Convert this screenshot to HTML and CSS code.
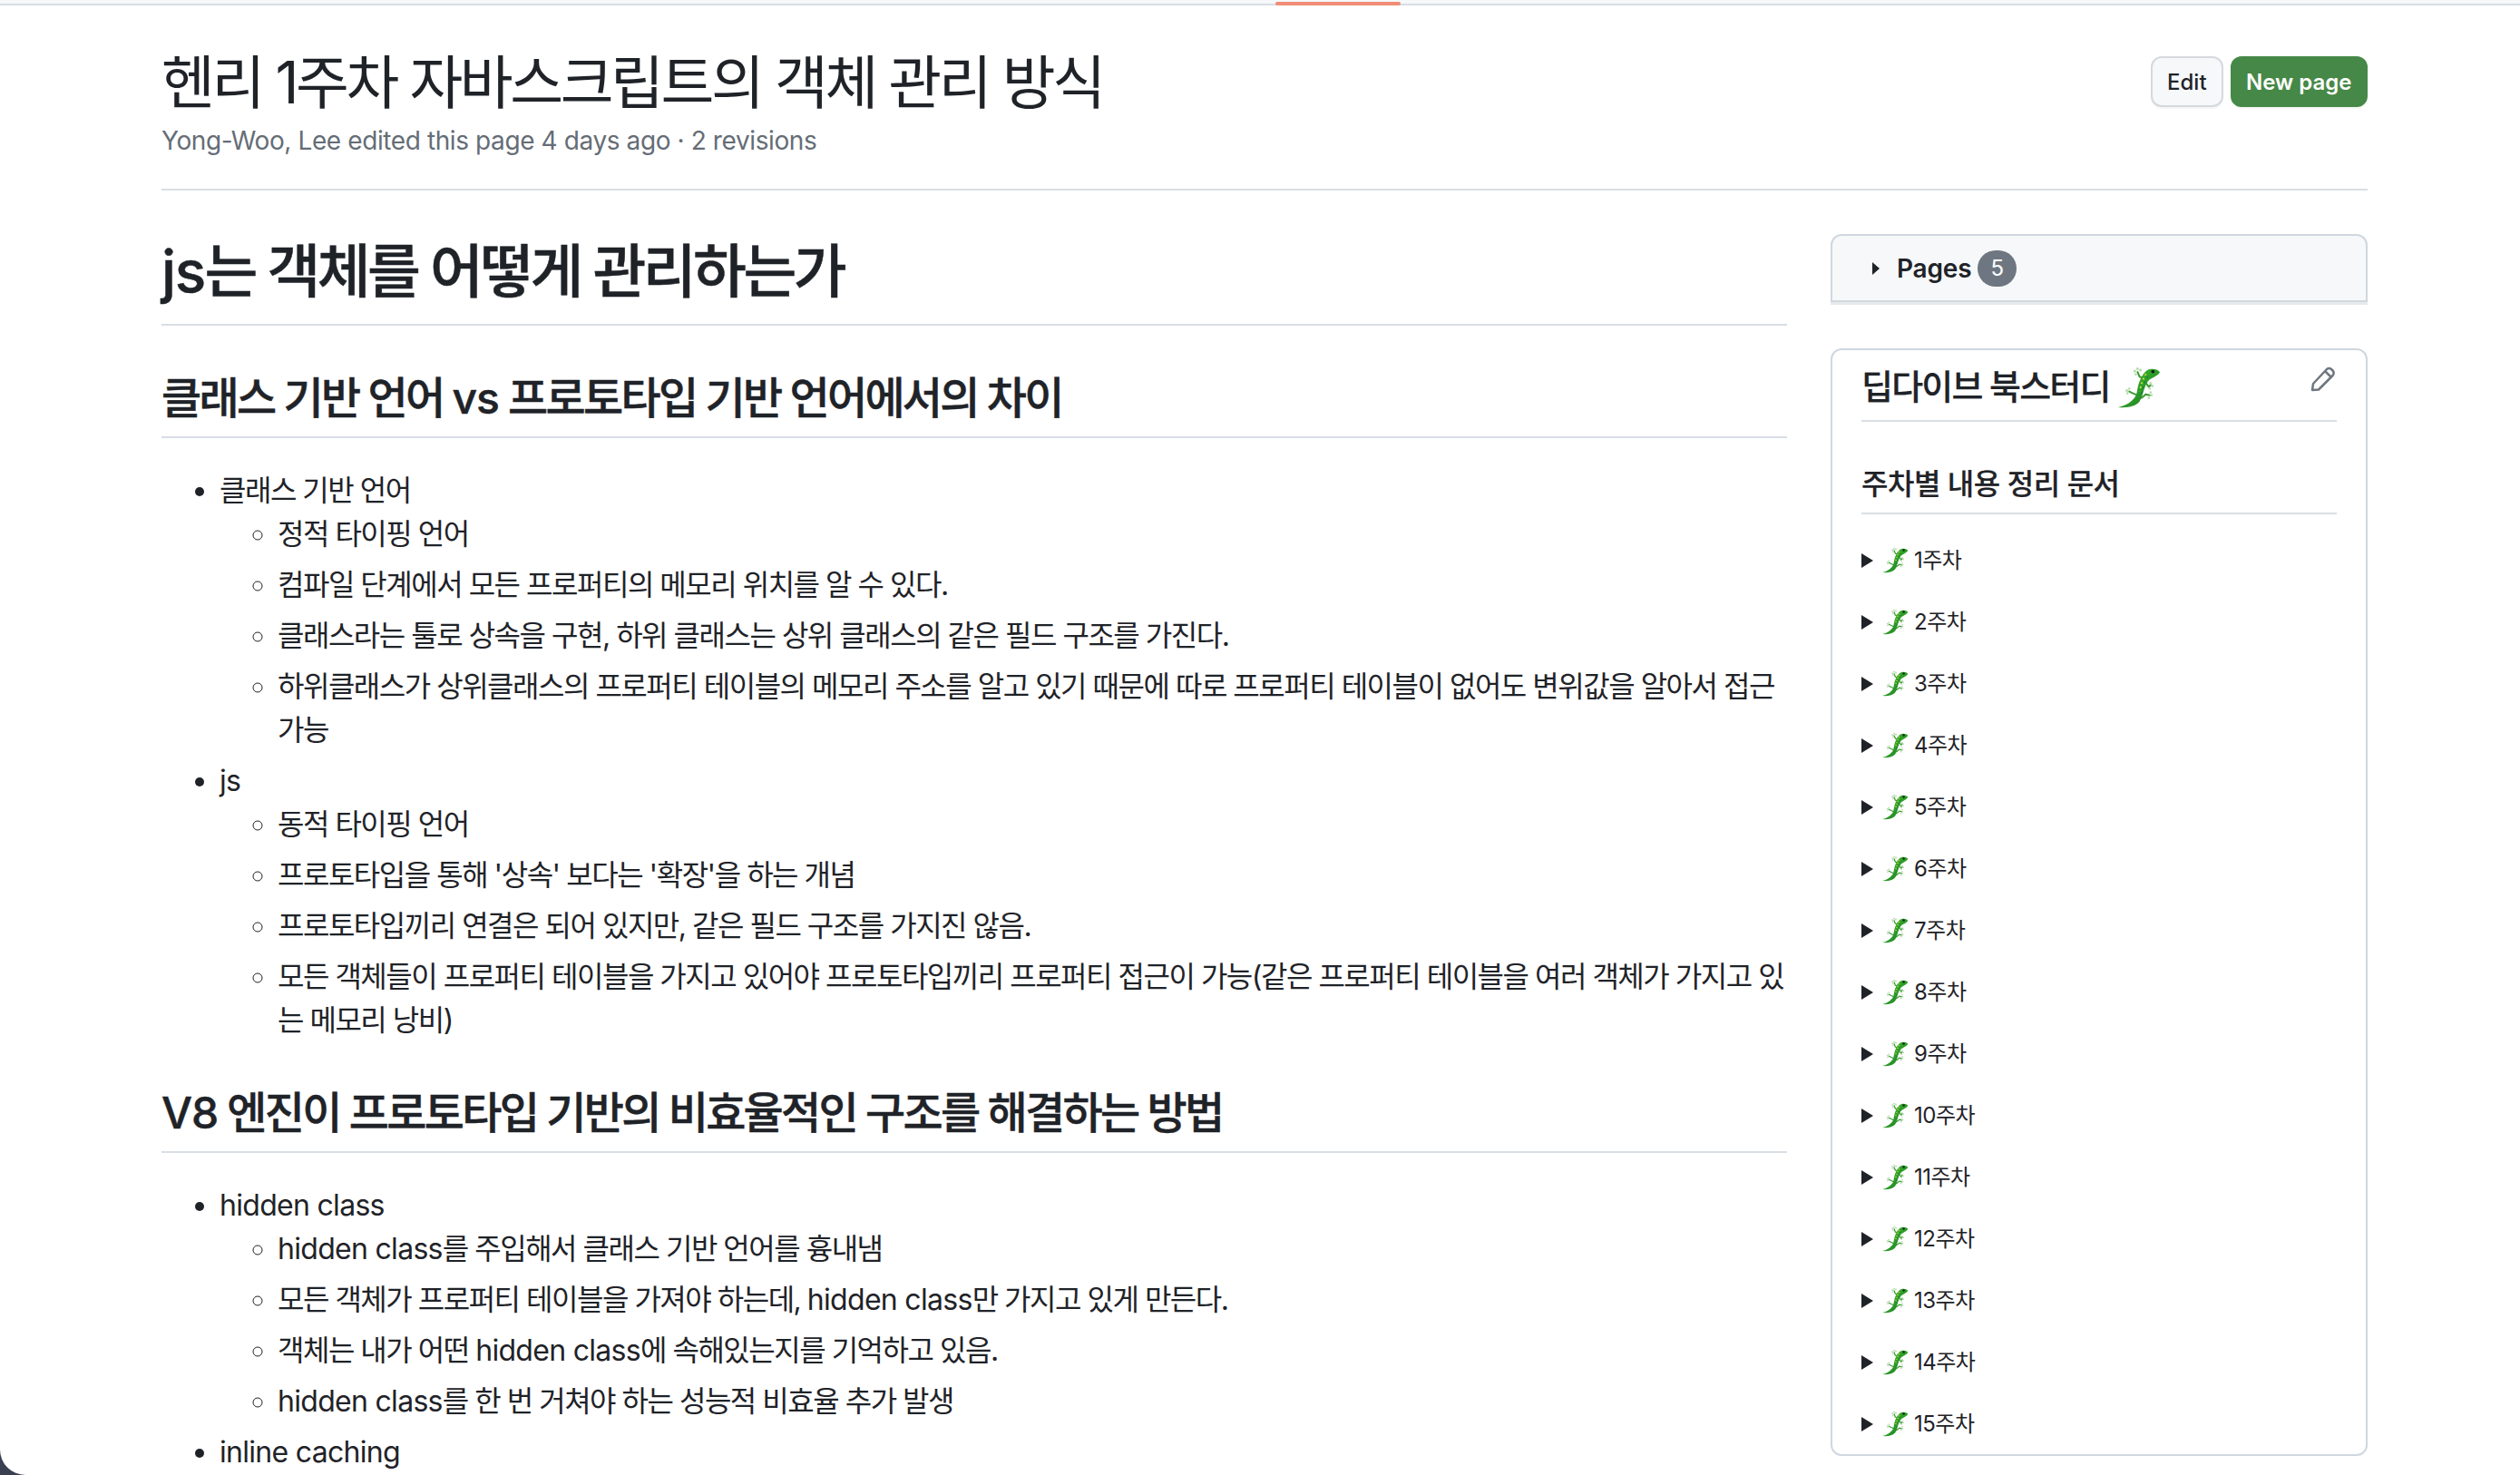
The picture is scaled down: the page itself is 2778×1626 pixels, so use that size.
FILE: index.html
```html
<!DOCTYPE html>
<html lang="ko">
<head>
<meta charset="utf-8">
<title>헨리 1주차 자바스크립트의 객체 관리 방식</title>
<link rel="stylesheet" href="styles.css">
</head>
<body>
<svg class="defs" width="0" height="0" aria-hidden="true">
  <defs>
    <linearGradient id="liz" x1="0" y1="0" x2="1" y2="1">
      <stop offset="0" stop-color="#4cc52a"/>
      <stop offset=".55" stop-color="#2b9a28"/>
      <stop offset="1" stop-color="#17741e"/>
    </linearGradient>
    <symbol id="lizard" viewBox="7 7 47 47">
      <g fill="none" stroke="#3f9a35" stroke-width="2" stroke-linecap="round" stroke-linejoin="round">
        <path d="M37 20 L31 18 L29 13"/>
        <path d="M38 25 L41 29 L43 27"/>
        <path d="M29 38 L24 36 L20 34"/>
        <path d="M33 41 L38 37 L42 38"/>
      </g>
      <g fill="#b4dcab">
        <circle cx="26" cy="12" r="1.500"/><circle cx="29" cy="9.500" r="1.500"/><circle cx="32" cy="11" r="1.500"/><circle cx="27" cy="15.500" r="1.300"/>
        <circle cx="43" cy="25" r="1.300"/><circle cx="45" cy="28" r="1.300"/><circle cx="42" cy="31" r="1.300"/>
        <circle cx="17.500" cy="33" r="1.500"/><circle cx="20" cy="31" r="1.300"/><circle cx="18" cy="36" r="1.300"/>
        <circle cx="43" cy="35" r="1.300"/><circle cx="44" cy="38" r="1.300"/><circle cx="41" cy="41" r="1.300"/>
      </g>
      <path fill="url(#liz)" d="M53 13 C51 10 46 9 42 10 C38 11 35 15 33 19 C30 24 29 30 28 36 C27 41 20 49 8 51 C18 52 27 50 31 45 C34 40 35 34 37 29 C38 26 40 23 42 21 C45 19 51 17 53 13Z"/>
      <path fill="none" stroke="#d0df30" stroke-width="1.800" stroke-dasharray="2 3" d="M38 15 C35 20 33 26 31 34"/>
      <path fill="none" stroke="#0f7c52" stroke-width="1.400" stroke-dasharray="2 4" d="M40 18 C37 23 35 29 33 37"/>
      <circle cx="45.500" cy="12.500" r="1.900" fill="#10241a"/>
    </symbol>
  </defs>
</svg>
<div class="window">
  <div class="topbar"><span class="progress"></span></div>
  <div class="page">
    <header class="page-head">
      <div class="head-text">
        <h1 class="page-title">헨리 1주차 자바스크립트의 객체 관리 방식</h1>
        <p class="page-meta">Yong-Woo, Lee edited this page 4 days ago · 2 revisions</p>
      </div>
      <div class="actions">
        <a class="btn">Edit</a>
        <a class="btn btn-green">New page</a>
      </div>
    </header>
    <div class="layout">
      <main class="content">
        <h1><span class="lat">js</span>는 객체를 어떻게 관리하는가</h1>
        <h2>클래스 기반 언어 <span class="lat">vs</span> 프로토타입 기반 언어에서의 차이</h2>
        <ul>
          <li>클래스 기반 언어
            <ul>
              <li>정적 타이핑 언어</li>
              <li>컴파일 단계에서 모든 프로퍼티의 메모리 위치를 알 수 있다.</li>
              <li>클래스라는 툴로 상속을 구현, 하위 클래스는 상위 클래스의 같은 필드 구조를 가진다.</li>
              <li>하위클래스가 상위클래스의 프로퍼티 테이블의 메모리 주소를 알고 있기 때문에 따로 프로퍼티 테이블이 없어도 변위값을 알아서 접근 가능</li>
            </ul>
          </li>
          <li><span class="lat">js</span>
            <ul>
              <li>동적 타이핑 언어</li>
              <li>프로토타입을 통해 '상속' 보다는 '확장'을 하는 개념</li>
              <li>프로토타입끼리 연결은 되어 있지만, 같은 필드 구조를 가지진 않음.</li>
              <li>모든 객체들이 프로퍼티 테이블을 가지고 있어야 프로토타입끼리 프로퍼티 접근이 가능(같은 프로퍼티 테이블을 여러 객체가 가지고 있는 메모리 낭비)</li>
            </ul>
          </li>
        </ul>
        <h2><span class="lat">V8</span> 엔진이 프로토타입 기반의 비효율적인 구조를 해결하는 방법</h2>
        <ul>
          <li><span class="lat">hidden class</span>
            <ul>
              <li><span class="lat">hidden class</span>를 주입해서 클래스 기반 언어를 흉내냄</li>
              <li>모든 객체가 프로퍼티 테이블을 가져야 하는데, <span class="lat">hidden class</span>만 가지고 있게 만든다.</li>
              <li>객체는 내가 어떤 <span class="lat">hidden class</span>에 속해있는지를 기억하고 있음.</li>
              <li><span class="lat">hidden class</span>를 한 번 거쳐야 하는 성능적 비효율 추가 발생</li>
            </ul>
          </li>
          <li><span class="lat">inline caching</span></li>
        </ul>
      </main>
      <aside class="sidebar">
        <div class="pages-box">
          <svg class="caret" viewBox="0 0 8 14" width="8" height="14"><path d="M0 0 L8 7 L0 14Z"/></svg>
          <span class="pages-label">Pages</span>
          <span class="counter">5</span>
        </div>
        <div class="custom-box">
          <svg class="pencil" viewBox="0 0 27 28" width="27" height="28" fill="none" stroke="#6e7781" stroke-width="2.500" stroke-linejoin="round">
            <path d="M2 26 L3 19 L18 3 Q20.500 1 23 3 L25 5 Q26.500 7.500 24.500 10 L9 25.500Z"/>
            <path d="M16 5 L23 12"/>
          </svg>
          <h2 class="box-title">딥다이브 북스터디 <svg class="emoji-lg"><use href="#lizard"/></svg></h2>
          <h3 class="box-sub">주차별 내용 정리 문서</h3>
          <details><summary><svg class="emoji"><use href="#lizard"/></svg> 1주차</summary></details>
          <details><summary><svg class="emoji"><use href="#lizard"/></svg> 2주차</summary></details>
          <details><summary><svg class="emoji"><use href="#lizard"/></svg> 3주차</summary></details>
          <details><summary><svg class="emoji"><use href="#lizard"/></svg> 4주차</summary></details>
          <details><summary><svg class="emoji"><use href="#lizard"/></svg> 5주차</summary></details>
          <details><summary><svg class="emoji"><use href="#lizard"/></svg> 6주차</summary></details>
          <details><summary><svg class="emoji"><use href="#lizard"/></svg> 7주차</summary></details>
          <details><summary><svg class="emoji"><use href="#lizard"/></svg> 8주차</summary></details>
          <details><summary><svg class="emoji"><use href="#lizard"/></svg> 9주차</summary></details>
          <details><summary><svg class="emoji"><use href="#lizard"/></svg> 10주차</summary></details>
          <details><summary><svg class="emoji"><use href="#lizard"/></svg> 11주차</summary></details>
          <details><summary><svg class="emoji"><use href="#lizard"/></svg> 12주차</summary></details>
          <details><summary><svg class="emoji"><use href="#lizard"/></svg> 13주차</summary></details>
          <details><summary><svg class="emoji"><use href="#lizard"/></svg> 14주차</summary></details>
          <details><summary><svg class="emoji"><use href="#lizard"/></svg> 15주차</summary></details>
        </div>
      </aside>
    </div>
  </div>
</div>
</body>
</html>
```
FILE: styles.css
```css
* { box-sizing: border-box; }
html, body { margin: 0; height: 100%; }
body {
  background: #3a3f52;
  overflow: hidden;
  color: #1f2328;
  font-family: Inter, "Noto Sans CJK KR", sans-serif;
  font-size: 32px;
  line-height: 1.5;
}
.defs { position: absolute; }
.window {
  height: 100%;
  background: #fff;
  border-bottom-left-radius: 28px;
  overflow: hidden;
}
.topbar {
  position: relative;
  height: 6px;
  background: #f6f8fa;
  border-bottom: 2px solid #d8dee4;
}
.progress {
  position: absolute;
  left: 1406px;
  top: 2px;
  width: 138px;
  height: 4px;
  border-radius: 2px;
  background: #ef8d75;
}
.page { width: 2432px; margin-left: 178px; padding-top: 43px; }
.page-head {
  display: flex;
  justify-content: space-between;
  align-items: flex-start;
  padding-bottom: 32px;
  border-bottom: 2px solid #d8dee4;
}
.head-text { padding-top: 2px; }
.page-title { margin: 0; font-size: 64px; line-height: 80px; font-weight: 400; letter-spacing: -3.450px; }
.page-meta { margin: 3px 0 0; font-size: 28px; line-height: 42px; color: #656d76; letter-spacing: -0.400px; }
.actions { display: flex; gap: 8px; margin-top: 13px; }
.btn {
  display: flex;
  align-items: center;
  height: 56px;
  padding: 2px 16px 0;
  border: 2px solid #d5d9de;
  border-radius: 12px;
  background: #f6f8fa;
  font-size: 24px;
  font-weight: 500;
  box-shadow: 0 2px 0 rgba(31,35,40,.04);
}
.btn-green { background: #468847; border-color: #468847; color: #fff; font-weight: 600; padding: 2px 15.500px 0; }
.layout { display: flex; gap: 48px; margin-top: 48px; align-items: flex-start; }
.content { width: 1792px; flex: none; }
.content h1, .content h2 {
  margin: 0;
  border-bottom: 2px solid #d8dee4;
  font-weight: 500;
}
.content h1 { font-size: 64px; line-height: 80px; padding: 1px 0 18px; letter-spacing: -3.550px; -webkit-text-stroke: 0.500px #1f2328; }
.content h1 .lat { letter-spacing: -1.500px; }
.content h2 { font-size: 48px; line-height: 60px; padding: 2px 0 12px; margin-top: 48px; letter-spacing: -2.700px; -webkit-text-stroke: 0.500px #1f2328; }
.content h2 .lat { letter-spacing: -1px; }
.content > ul { margin: 34px 0 -2px; padding-left: 64px; letter-spacing: -1.490px; }
.lat { letter-spacing: -0.700px; }
.content ul ul { margin: 0; padding-left: 64px; list-style-type: circle; }
.content li + li { margin-top: 8px; }
.sidebar { width: 592px; flex: none; }
.pages-box {
  display: flex;
  align-items: center;
  height: 75px;
  padding-left: 44px;
  border: 2px solid #d0d7de;
  border-radius: 12px 12px 0 0;
  background: #f6f8fa;
  box-shadow: 0 3px 0 #e6e9ec;
}
.caret { fill: #1f2328; }
.pages-label { margin-left: 19px; font-size: 28px; font-weight: 600; letter-spacing: -0.200px; }
.counter {
  display: flex;
  align-items: center;
  justify-content: center;
  width: 43px;
  height: 40px;
  margin-left: 7px;
  border-radius: 20px;
  background: #6e7781;
  color: #fff;
  font-size: 24px;
}
.custom-box {
  position: relative;
  margin-top: 51px;
  height: 1221px;
  padding: 18px 32px 16px;
  border: 2px solid #d0d7de;
  border-radius: 12px;
}
.pencil { position: absolute; right: 34px; top: 18px; }
.box-title {
  margin: 0;
  height: 61px;
  font-size: 38px;
  line-height: 45px;
  font-weight: 500;
  border-bottom: 2px solid #d8dee4;
  letter-spacing: -1.800px;
  -webkit-text-stroke: 0.200px #1f2328;
  white-space: nowrap;
}
.emoji-lg { width: 48px; height: 48px; vertical-align: 2px; margin: -14px 0; }
.box-sub {
  margin: 49px 0 33px;
  font-size: 32px;
  line-height: 40px;
  font-weight: 500;
  padding-bottom: 11px;
  border-bottom: 2px solid #d8dee4;
  letter-spacing: -0.500px;
  -webkit-text-stroke: 0.200px #1f2328;
}
details { font-size: 24px; line-height: 36px; margin-top: 32px; letter-spacing: -0.500px; }
.box-sub + details { margin-top: 0; }
summary {
  display: flex;
  align-items: center;
  list-style: none;
  white-space: nowrap;
}
summary::before {
  content: "";
  width: 0;
  height: 0;
  margin-right: 9px;
  border-left: 13px solid #1f2328;
  border-top: 8px solid transparent;
  border-bottom: 8px solid transparent;
}
.emoji { width: 30px; height: 30px; margin-right: 6px; flex: none; }
```
